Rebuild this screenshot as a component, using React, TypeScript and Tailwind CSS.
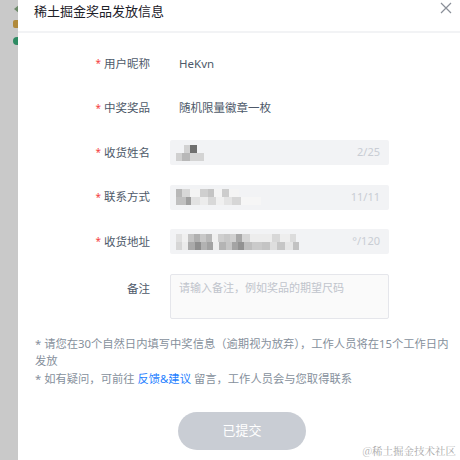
import React from "react";

const font = { fontFamily: '"Noto Sans", "Noto Sans CJK SC", sans-serif' };

type Row = [number, string][];

// mosaic rows of [width, colour]
const nameBlur: Row[] = [
  [[8, "transparent"], [6, "#d2d2d2"], [7, "#6f6f6f"]],
  [[6, "#d0d0d0"], [8, "#b8b8b8"], [14, "#d4d4d4"]],
];
const phoneBlur: Row[] = [
  [[6, "#b8b8b8"], [8, "#d8d8d8"], [10, "#f4f4f4"], [8, "#cfcfcf"], [6, "#c4c4c4"], [8, "#f4f4f4"], [7, "#cdcdcd"], [10, "#f4f4f4"]],
  [[10, "#c0c0c0"], [5, "#9f9f9f"], [9, "#e2e2e2"], [8, "#ececec"], [8, "#d8d8d8"], [8, "#f0f0f0"], [8, "#e4e4e4"], [9, "#d6d6d6"], [20, "#f6f6f6"]],
];
const addrBlur: Row[] = [
  [[6, "#e0e0e0"], [6, "#f0f0f0"], [6, "#c4c4c4"], [6, "#b0b0b0"], [6, "#c8c8c8"], [6, "#b8b8b8"], [6, "#f0f0f0"], [6, "#cfcfcf"], [6, "#c8c8c8"], [6, "#d0d0d0"], [6, "#a8a8a8"], [8, "#d6d6d6"], [22, "#ededed"], [8, "#d8d8d8"], [10, "#eeeeee"], [6, "#dcdcdc"]],
  [[6, "#d6d6d6"], [6, "#ebebeb"], [7, "#aaaaaa"], [6, "#8e8e8e"], [6, "#b2b2b2"], [6, "#a2a2a2"], [6, "#eeeeee"], [7, "#b4b4b4"], [6, "#c6c6c6"], [6, "#a4a4a4"], [6, "#929292"], [8, "#bebebe"], [10, "#cacaca"], [8, "#c4c4c4"], [7, "#dedede"], [8, "#c6c6c6"], [8, "#e6e6e6"], [6, "#c2c2c2"]],
];

function Mosaic({ rows }: { rows: Row[] }) {
  return (
    <div className="flex flex-col blur-[0.7px]">
      {rows.map((row, r) => (
        <div key={r} className="flex h-[8px]">
          {row.map(([w, c], i) => (
            <div key={i} className="h-full" style={{ width: w, background: c }} />
          ))}
        </div>
      ))}
    </div>
  );
}

function Label({ text, required = true }: { text: string; required?: boolean }) {
  return (
    <div className="w-[132px] shrink-0 flex justify-end items-center text-[11.5px] text-[#4e5969]">
      {required && <span className="text-[#f53f3f] mr-[3px] text-[10px]">*</span>}
      <span>{text}</span>
    </div>
  );
}

function InputRow({ label, count, rows }: { label: string; count: string; rows: Row[] }) {
  return (
    <div className="flex items-center h-[25px]">
      <Label text={label} />
      <div className="ml-[20px] w-[219px] h-[25px] bg-[#f2f3f5] rounded-[2px] flex items-center justify-between pl-[6px] pr-[9px] overflow-hidden">
        <Mosaic rows={rows} />
        <span className="text-[11px] text-[#c9cdd4]">{count}</span>
      </div>
    </div>
  );
}

export default function App() {
  return (
    <div className="w-[460px] h-[460px] flex bg-white relative overflow-hidden" style={font}>
      {/* page behind the modal */}
      <div className="w-[18px] shrink-0 bg-[#c9c9c9] flex flex-col items-end overflow-hidden pt-[5px] gap-[7px]">
        <div className="w-0 h-0 -mr-[1px] border-y-[4px] border-y-transparent border-r-[5px] border-r-[#6d8a6a]" />
        <div className="w-[5px] h-[8px] rounded-l-[2px] bg-[#b08a3c]" />
        <div className="w-[5px] h-[8px] mt-[2px] rounded-l-full bg-[#2e8b63]" />
      </div>

      {/* modal */}
      <div className="flex-1 flex flex-col">
        <div className="h-[33px] shrink-0 flex items-start justify-between border-b-2 border-[#f2f3f5] pl-[16px] pr-[8px] pt-[3px]">
          <span className="text-[13px] leading-[16px] text-[#1d2129]">稀土掘金奖品发放信息</span>
          <svg width="12" height="12" viewBox="0 0 12 12" className="mt-[-1px]">
            <path d="M1 1L11 11M11 1L1 11" stroke="#8a8f98" strokeWidth="1.2" />
          </svg>
        </div>

        <div className="flex flex-col gap-[19.5px] mt-[18px]">
          <div className="flex items-center h-[25px]">
            <Label text="用户昵称" />
            <span className="ml-[29px] text-[11.5px] text-[#4e5969]">HeKvn</span>
          </div>
          <div className="flex items-center h-[25px]">
            <Label text="中奖奖品" />
            <span className="ml-[29px] text-[11.5px] text-[#4e5969]">随机限量徽章一枚</span>
          </div>
          <InputRow label="收货姓名" count="2/25" rows={nameBlur} />
          <InputRow label="联系方式" count="11/11" rows={phoneBlur} />
          <InputRow label="收货地址" count="°/120" rows={addrBlur} />
          <div className="flex items-start">
            <div className="w-[132px] shrink-0 flex justify-end pt-[6px] text-[11.5px] text-[#4e5969]">备注</div>
            <div className="ml-[20px] w-[219px] h-[45px] border border-[#e5e6eb] bg-[#fafafa] rounded-[2px] px-[8px] pt-[5px] text-[11px] text-[#c0c4cc]">
              请输入备注，例如奖品的期望尺码
            </div>
          </div>
        </div>

        <div className="mt-[16px] ml-[17px] w-[420px] text-[11.3px] leading-[17.5px] text-[#86909c]">
          <p>* 请您在30个自然日内填写中奖信息（逾期视为放弃），工作人员将在15个工作日内发放</p>
          <p>
            * 如有疑问，可前往 <span className="text-[#1e80ff]">反馈&amp;建议</span> 留言，工作人员会与您取得联系
          </p>
        </div>

        <button className="mt-[25px] ml-[160px] w-[128px] h-[38px] rounded-full bg-[#c9cdd4] text-white text-[13px]">
          已提交
        </button>
      </div>

      <span
        className="absolute right-[4px] bottom-[1px] text-[10.5px] text-[#a9a9a9]"
        style={{ fontFamily: '"Noto Serif CJK SC", "Noto Sans CJK SC", serif' }}
      >
        @稀土掘金技术社区
      </span>
    </div>
  );
}
